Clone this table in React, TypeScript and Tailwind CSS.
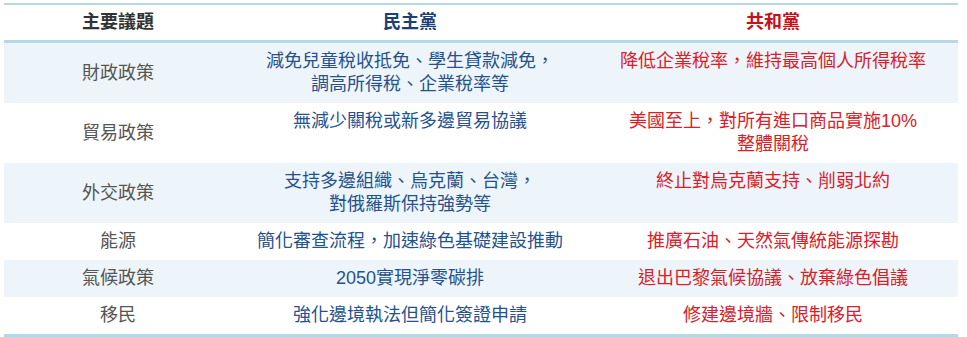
import React from "react";

const rows: { topic: string; dem: React.ReactNode; rep: React.ReactNode }[] = [
  {
    topic: "財政政策",
    dem: (
      <>
        減免兒童稅收抵免、學生貸款減免，
        <br />
        調高所得稅、企業稅率等
      </>
    ),
    rep: "降低企業稅率，維持最高個人所得稅率",
  },
  {
    topic: "貿易政策",
    dem: "無減少關稅或新多邊貿易協議",
    rep: (
      <>
        美國至上，對所有進口商品實施10%
        <br />
        整體關稅
      </>
    ),
  },
  {
    topic: "外交政策",
    dem: (
      <>
        支持多邊組織、烏克蘭、台灣，
        <br />
        對俄羅斯保持強勢等
      </>
    ),
    rep: "終止對烏克蘭支持、削弱北約",
  },
  { topic: "能源", dem: "簡化審查流程，加速綠色基礎建設推動", rep: "推廣石油、天然氣傳統能源探勘" },
  { topic: "氣候政策", dem: "2050實現淨零碳排", rep: "退出巴黎氣候協議、放棄綠色倡議" },
  { topic: "移民", dem: "強化邊境執法但簡化簽證申請", rep: "修建邊境牆、限制移民" },
];

export default function App() {
  return (
    <div
      lang="zh-TW"
      className="min-h-[337px] bg-white pt-[3px] pl-[4px] font-['Liberation_Sans','Noto_Sans_CJK_TC',sans-serif] text-[18px] leading-[23px]"
    >
      <table className="w-[954px] border-collapse table-fixed">
        <colgroup>
          <col className="w-[228px]" />
          <col className="w-[356px]" />
          <col />
        </colgroup>
        <thead>
          <tr className="border-t-2 border-b-[3px] border-[#b4d8e4]">
            <th className="py-[6px] text-center font-bold text-[#333333]">主要議題</th>
            <th className="py-[6px] text-center font-bold text-[#1c3f7a]">民主黨</th>
            <th className="py-[6px] text-center font-bold text-[#c8101a]">共和黨</th>
          </tr>
        </thead>
        <tbody className="border-b-[3px] border-[#b4d8e4]">
          {rows.map((r, i) => (
            <tr key={i} className={i % 2 === 0 ? "bg-[#eef5fa]" : "bg-white"}>
              <td className="py-[7px] text-center align-middle text-[#555555]">{r.topic}</td>
              <td className="py-[7px] text-center align-top text-[#24528f]">{r.dem}</td>
              <td className="py-[7px] text-center align-top text-[#d8202a]">{r.rep}</td>
            </tr>
          ))}
        </tbody>
      </table>
    </div>
  );
}
